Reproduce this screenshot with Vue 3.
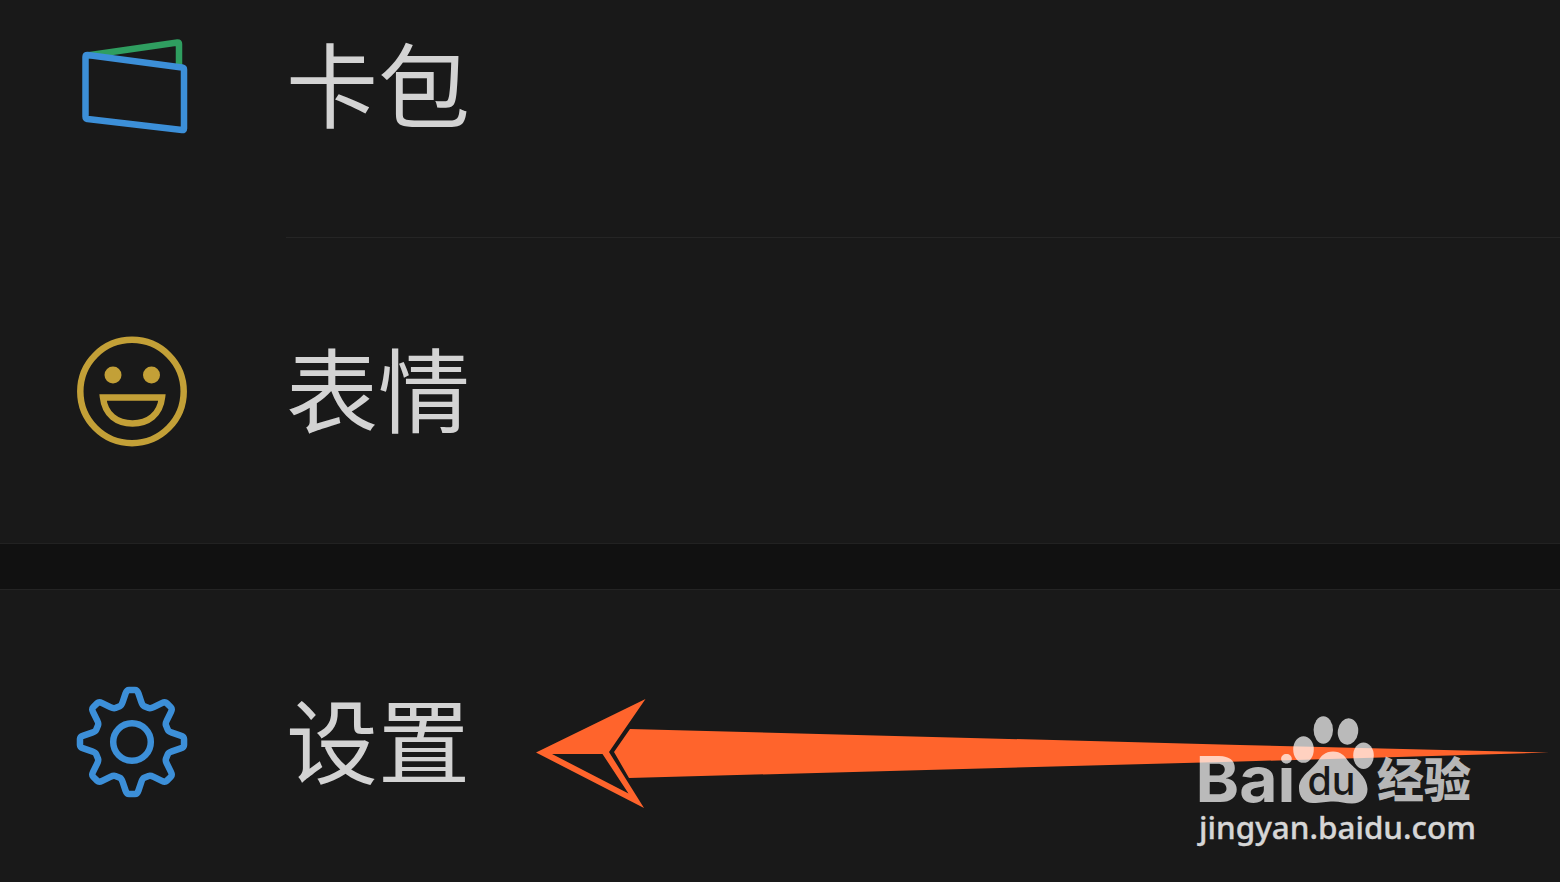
<script setup>
const groups = [
  [
    { icon: 'cards', label: '卡包' },
    { icon: 'sticker', label: '表情' }
  ],
  [{ icon: 'settings', label: '设置' }]
]

// outline of the gear: eight teeth, corners rounded off with quadratic curves
function gearPath() {
  const points = []
  for (let i = 0; i < 8; i++) {
    for (const [offset, r] of [[-5.8, 52.3], [5.8, 52.3], [16, 38], [29, 38]]) {
      const a = ((i * 45 + offset) * Math.PI) / 180
      points.push([60 + r * Math.sin(a), 60 - r * Math.cos(a)])
    }
  }
  const n = points.length
  const mix = (p, q, t) => [p[0] + (q[0] - p[0]) * t, p[1] + (q[1] - p[1]) * t].map((v) => v.toFixed(2)).join(' ')
  return (
    points
      .map((p, i) => {
        const prev = points[(i + n - 1) % n]
        const next = points[(i + 1) % n]
        return `${i ? 'L' : 'M'}${mix(p, prev, 0.22)}Q${mix(p, p, 0)} ${mix(p, next, 0.22)}`
      })
      .join('') + 'Z'
  )
}

const gear = gearPath()
</script>

<template>
  <div class="page">
    <div class="list">
      <div v-for="(group, g) in groups" :key="g" class="group">
        <div v-for="item in group" :key="item.label" class="row" :class="item.icon">
          <svg class="icon" viewBox="0 0 120 120">
            <g v-if="item.icon === 'cards'" fill="none" stroke-width="6.5" stroke-linejoin="round">
              <path d="M15 29.500L105.500 16.500Q107 16.500 107 18V39.500" stroke="#2f9e60" />
              <path d="M13.500 31Q13.500 29 15.500 29L110 41.500Q112 42 112 43.500V102.500Q112 104.500 110 104L15.500 93Q13.500 92.500 13.500 90.500Z" stroke="#3c8fd8" />
            </g>
            <g v-else-if="item.icon === 'sticker'" fill="none" stroke="#c3a037" stroke-width="6.5">
              <circle cx="60" cy="60.500" r="51.700" />
              <circle cx="41" cy="44" r="8.500" fill="#c3a037" stroke="none" />
              <circle cx="79.500" cy="44" r="8.500" fill="#c3a037" stroke="none" />
              <path d="M31 66.500H90C88 84 76 92.500 60.500 92.500S33 84 31 66.500Z" />
            </g>
            <g v-else fill="none" stroke="#3c8fd8" stroke-width="6.500" stroke-linejoin="round">
              <path :d="gear" />
              <circle cx="60" cy="60" r="18.800" />
            </g>
          </svg>
          <div class="label">{{ item.label }}</div>
        </div>
      </div>
    </div>

    <svg class="overlay" viewBox="0 0 1560 882">
      <g fill="#ff642c">
        <path d="M536 752.500L645.500 699L609 752L644 808ZM552 754L628.500 793.500L602.500 754Z" fill-rule="evenodd" />
        <path d="M630 729L1240 745L1549 752.500L1240 761.500L629 778L614 752Z" />
      </g>

      <g class="watermark">
        <text class="brand" x="1195.500" y="802" textLength="100" lengthAdjust="spacingAndGlyphs">Bai</text>
        <ellipse cx="1303.500" cy="749.500" rx="10.300" ry="13.300" />
        <ellipse cx="1323.300" cy="730" rx="9.700" ry="13.800" />
        <ellipse cx="1348" cy="731.500" rx="10.200" ry="13.200" transform="rotate(8 1348 731.500)" />
        <ellipse cx="1363.500" cy="755.700" rx="10.300" ry="13.300" />
        <path d="M1333 751.500C1341 751.500 1345 756 1348 761C1353 768 1367 775 1367.500 789C1367.500 798 1361 803.500 1352 803.500C1345 803.500 1340 801.500 1333.500 801.500C1326 801.500 1321 803 1313 803C1304 803 1299 797 1299 788C1299 776 1312 770 1318 761C1321 756 1325 751.500 1333 751.500Z" />
        <text class="chinese" x="1377" y="796.500" textLength="94" lengthAdjust="spacingAndGlyphs">经验</text>
      </g>
      <text class="du" x="1307.500" y="795" textLength="48" lengthAdjust="spacingAndGlyphs">du</text>
      <text class="url" x="1199" y="838.500" textLength="277" lengthAdjust="spacingAndGlyphs">jingyan.baidu.com</text>
    </svg>
  </div>
</template>

<style>
body {
  margin: 0;
  background: #191919;
}
</style>

<style scoped>
.page {
  position: relative;
  width: 1560px;
  height: 882px;
  overflow: hidden;
  background: #111111;
}

/* the first row is scrolled partly out of view */
.list {
  display: flex;
  flex-direction: column;
  gap: 45px;
  margin-top: -68px;
}

.group {
  background: #191919;
  border-top: 1px solid #242424;
  border-bottom: 1px solid #222222;
}

.row {
  display: flex;
  align-items: center;
  height: 305px;
  padding-left: 72px;
}

.row.settings {
  height: 303px;
}

.row + .row::before {
  content: '';
  position: absolute;
  left: 286px;
  right: 0;
  height: 1px;
  margin-top: -306px;
  background: #252525;
}

.icon {
  width: 120px;
  height: 120px;
  flex: none;
}

.label {
  margin-left: 94px;
  padding-bottom: 9px;
  font-family: 'Noto Sans CJK SC', sans-serif;
  font-size: 92px;
  line-height: 120px;
  color: #d3d3d3;
}

.overlay {
  position: absolute;
  top: 0;
  left: 0;
  width: 1560px;
  height: 882px;
}

.watermark {
  fill: #ffffff;
  fill-opacity: 0.7;
}

.brand {
  font: 700 63px Inter, sans-serif;
}

.chinese {
  font: 900 47px 'Noto Sans CJK SC', sans-serif;
}

.du {
  font: 500 39px Inter, sans-serif;
  fill: #191919;
}

.url {
  font: 500 31px 'Noto Sans', sans-serif;
  fill: #d6d6d6;
  stroke: #d6d6d6;
  stroke-width: 0.4px;
}
</style>
